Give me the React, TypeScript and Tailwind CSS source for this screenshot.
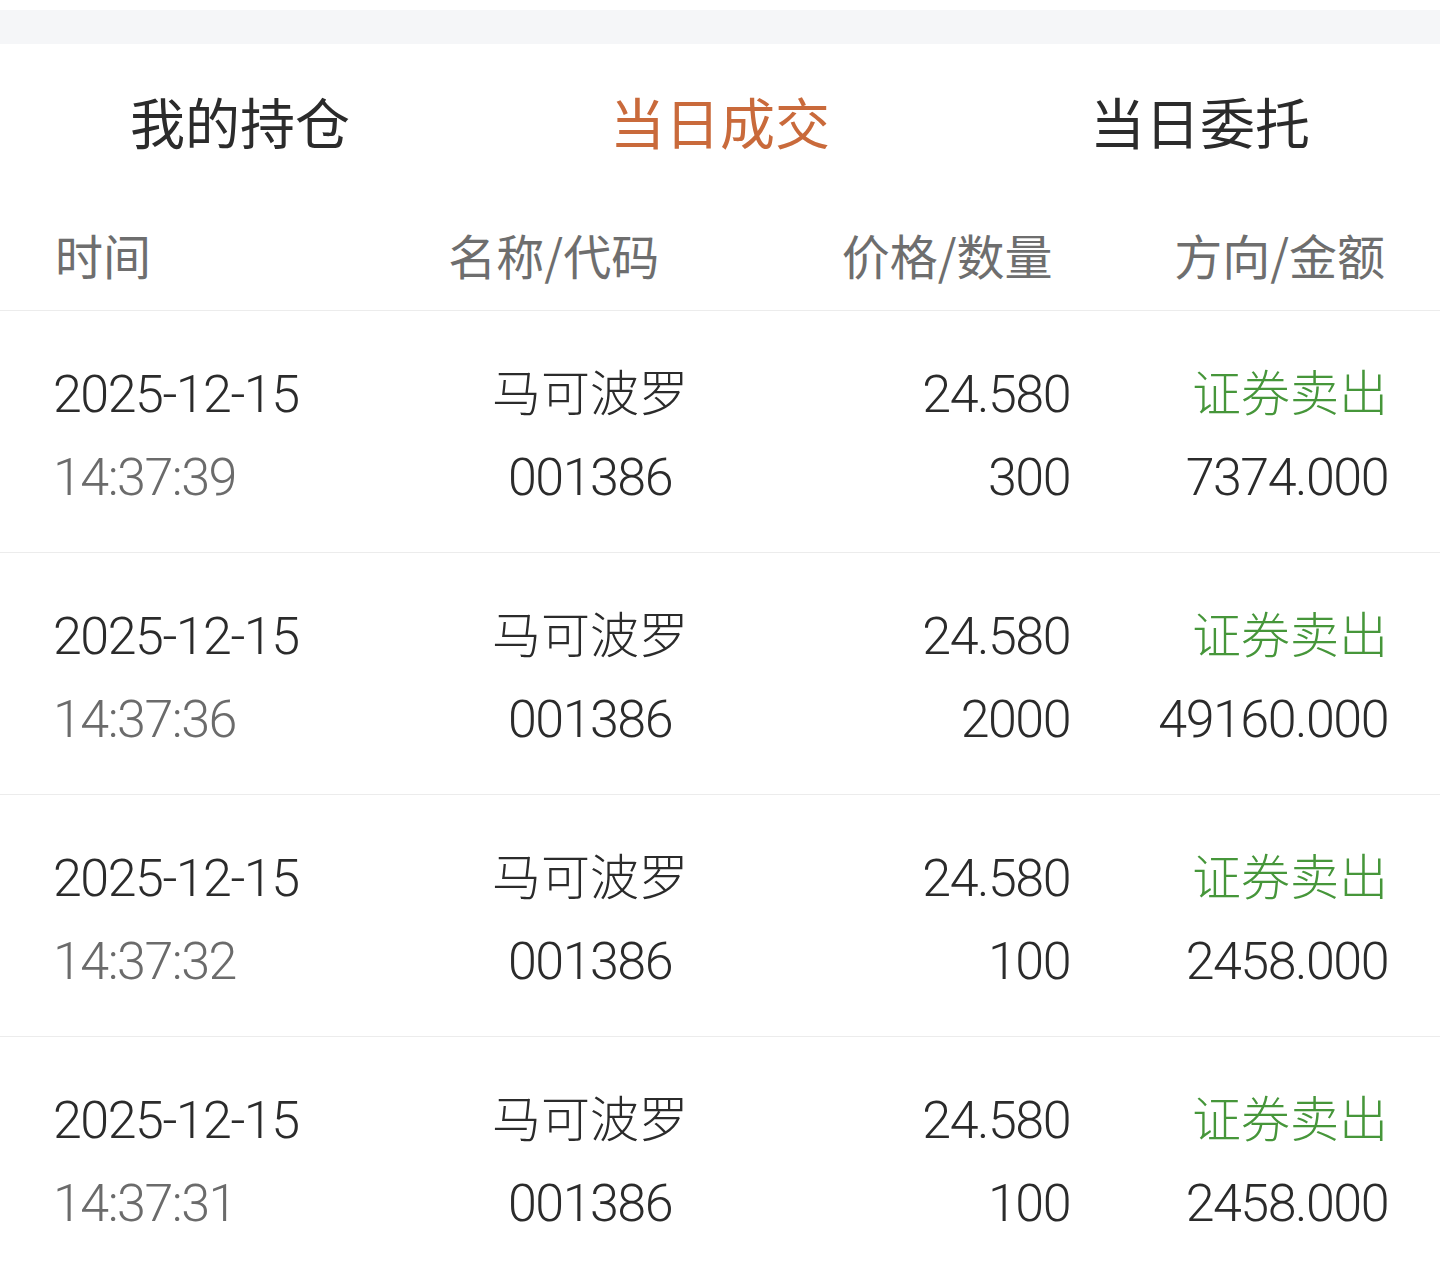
import React from "react";

const trades = [
  { date: "2025-12-15", time: "14:37:39", name: "马可波罗", code: "001386", price: "24.580", qty: "300", side: "证券卖出", amount: "7374.000" },
  { date: "2025-12-15", time: "14:37:36", name: "马可波罗", code: "001386", price: "24.580", qty: "2000", side: "证券卖出", amount: "49160.000" },
  { date: "2025-12-15", time: "14:37:32", name: "马可波罗", code: "001386", price: "24.580", qty: "100", side: "证券卖出", amount: "2458.000" },
  { date: "2025-12-15", time: "14:37:31", name: "马可波罗", code: "001386", price: "24.580", qty: "100", side: "证券卖出", amount: "2458.000" },
];

const tabs = ["我的持仓", "当日成交", "当日委托"];

export default function App() {
  return (
    <div className="min-h-screen bg-white font-['Roboto','Noto_Sans_CJK_SC',sans-serif] text-[#2b2b2b] overflow-hidden">
      {/* top spacer + gray band */}
      <div className="h-[10px] bg-white" />
      <div className="h-[34px] bg-[#f5f6f8]" />

      {/* --- TABS --- */}
      <div className="grid grid-cols-3 h-[162px] pb-[10px] items-center">
        {tabs.map((t, i) => (
          <div
            key={t}
            className={`text-center text-[55px] leading-none font-['Noto_Sans_CJK_SC',sans-serif] ${
              i === 1 ? "text-[#c96a3b]" : "text-[#2b2b2b]"
            }`}
          >
            {t}
          </div>
        ))}
      </div>

      {/* --- TABLE HEADER --- */}
      <div className="grid grid-cols-4 h-[105px] pb-[8px] items-center px-[55px] text-[48px] leading-none text-[#6e6e6e] font-['Noto_Sans_CJK_SC',sans-serif] border-b border-[#ececec]">
        <div className="text-left">时间</div>
        <div className="text-center">名称/代码</div>
        <div className="text-right">价格/数量</div>
        <div className="text-right">方向/金额</div>
      </div>

      {/* --- TRADE ROWS --- */}
      {trades.map((r, i) => (
        <div
          key={i}
          className="grid grid-cols-[377px_320px_320px_318px] h-[242px] pl-[53px] pt-[42px] border-b border-[#ececec] content-start font-light"
        >
          <div className="flex flex-col text-left">
            <span className="h-[83px] flex items-center text-[52px] tracking-[-1.5px]">{r.date}</span>
            <span className="h-[83px] flex items-center text-[52px] tracking-[-1.5px] text-[#6b6b6b]">{r.time}</span>
          </div>
          <div className="flex flex-col items-center">
            <span className="h-[83px] pb-[10px] flex items-center text-[49px] font-['Noto_Sans_CJK_SC',sans-serif]">{r.name}</span>
            <span className="h-[83px] flex items-center text-[52px] tracking-[-1.5px]">{r.code}</span>
          </div>
          <div className="flex flex-col items-end">
            <span className="h-[83px] flex items-center text-[52px] tracking-[-1.5px]">{r.price}</span>
            <span className="h-[83px] flex items-center text-[52px] tracking-[-1.5px]">{r.qty}</span>
          </div>
          <div className="flex flex-col items-end">
            <span className="h-[83px] pb-[10px] flex items-center text-[49px] text-[#46963a] font-['Noto_Sans_CJK_SC',sans-serif]">{r.side}</span>
            <span className="h-[83px] flex items-center text-[52px] tracking-[-1.5px]">{r.amount}</span>
          </div>
        </div>
      ))}
    </div>
  );
}
